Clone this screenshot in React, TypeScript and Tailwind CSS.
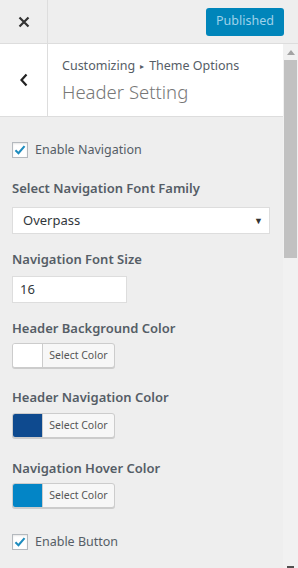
import React from "react";

const font = { fontFamily: '"Noto Sans", "Open Sans", sans-serif' };

function Check() {
  return (
    <div className="w-[16px] h-[16px] border border-[#b4b9be] bg-white flex items-center justify-center shadow-[inset_0_1px_2px_rgba(0,0,0,0.1)]">
      <svg width="14" height="14" viewBox="0 0 20 20">
        <path d="M3.5 10.5 L7.8 14.5 L16.5 4.5" fill="none" stroke="#1e8cbe" strokeWidth="3" />
      </svg>
    </div>
  );
}

function ColorBtn({ color }: { color: string }) {
  return (
    <div className="flex w-[103px] h-[25px] border border-[#ccc] rounded-[3px] bg-[#f7f7f7] overflow-hidden shadow-[0_1px_0_#ccc]">
      <div className="w-[30px] h-full border-r border-[#ccc]" style={{ backgroundColor: color }} />
      <div className="flex-1 flex items-center justify-center text-[10.5px] text-[#555]">Select Color</div>
    </div>
  );
}

function Label({ children }: { children: React.ReactNode }) {
  return <div className="text-[13px] font-semibold text-[#555d66] leading-[20px]">{children}</div>;
}

export default function App() {
  return (
    <div className="w-[298px] h-[568px] bg-[#eee] flex flex-col overflow-hidden" style={font}>
      <div className="h-[44px] flex items-stretch border-b border-[#ddd] bg-[#eee] shrink-0">
        <div className="w-[48px] border-r border-[#ddd] flex items-center justify-center">
          <svg width="12" height="12" viewBox="0 0 12 12">
            <path d="M1.5 1.5 L10.5 10.5 M10.5 1.5 L1.5 10.5" stroke="#333" strokeWidth="2.2" />
          </svg>
        </div>
        <div className="flex-1 flex items-center justify-end pr-[14px]">
          <div className="w-[78px] h-[28px] rounded-[3px] bg-[#0085ba] text-[#9ed2ea] text-[12.5px] flex items-center justify-center">
            Published
          </div>
        </div>
      </div>
      <div className="flex flex-1 min-h-0">
        <div className="w-[283px] flex flex-col">
          <div className="h-[73px] bg-white border-b border-[#ddd] flex">
            <div className="w-[48px] border-r border-[#ddd] flex items-center justify-center">
              <svg width="10" height="14" viewBox="0 0 10 14">
                <path d="M7.5 1.5 L2.5 7 L7.5 12.5" fill="none" stroke="#222" strokeWidth="2.2" />
              </svg>
            </div>
            <div className="pl-[14px] pt-[12px] text-[#555d66]">
              <div className="text-[12.5px] leading-[20px] flex items-center">
                Customizing <span className="text-[8px] mx-[5px]">▸</span> Theme Options
              </div>
              <div className="text-[18.5px] font-light leading-[28px] mt-[2px] text-[#777]">Header Setting</div>
            </div>
          </div>
          <div className="px-[12px] pt-[24px] flex flex-col">
            <div className="flex items-center gap-[7px] h-[18px]">
              <Check />
              <span className="text-[12.5px] text-[#555d66]">Enable Navigation</span>
            </div>
            <div className="mt-[19px]"><Label>Select Navigation Font Family</Label></div>
            <div className="mt-[9px] w-[258px] h-[27px] bg-white border border-[#ddd] flex items-center justify-between pl-[10px] pr-[6px] text-[13px] text-[#32373c]">
              <span>Overpass</span>
              <span className="text-[9px] text-[#333]">▼</span>
            </div>
            <div className="mt-[15px]"><Label>Navigation Font Size</Label></div>
            <div className="mt-[7px] w-[115px] h-[27px] bg-white border border-[#ddd] flex items-center pl-[7px] text-[13px] text-[#32373c]">16</div>
            <div className="mt-[15px]"><Label>Header Background Color</Label></div>
            <div className="mt-[5px]"><ColorBtn color="#ffffff" /></div>
            <div className="mt-[19px]"><Label>Header Navigation Color</Label></div>
            <div className="mt-[6px]"><ColorBtn color="#0e4a8f" /></div>
            <div className="mt-[20px]"><Label>Navigation Hover Color</Label></div>
            <div className="mt-[5px]"><ColorBtn color="#0385c6" /></div>
            <div className="mt-[25px] flex items-center gap-[7px] h-[18px]">
              <Check />
              <span className="text-[12.5px] text-[#555d66]">Enable Button</span>
            </div>
          </div>
        </div>
        <div className="w-[15px] bg-[#f1f1f1] flex flex-col items-center">
          <div className="h-[16px] flex items-center justify-center">
            <svg width="8" height="5" viewBox="0 0 8 5"><path d="M0 5 L4 0 L8 5 Z" fill="#a3a3a3" /></svg>
          </div>
          <div className="w-[13px] h-[198px] bg-[#c1c1c1]" />
          <div className="flex-1" />
          <div className="h-[6px] flex items-end justify-center">
            <div className="w-[7px] h-[2px] bg-[#505050]" />
          </div>
        </div>
      </div>
    </div>
  );
}
